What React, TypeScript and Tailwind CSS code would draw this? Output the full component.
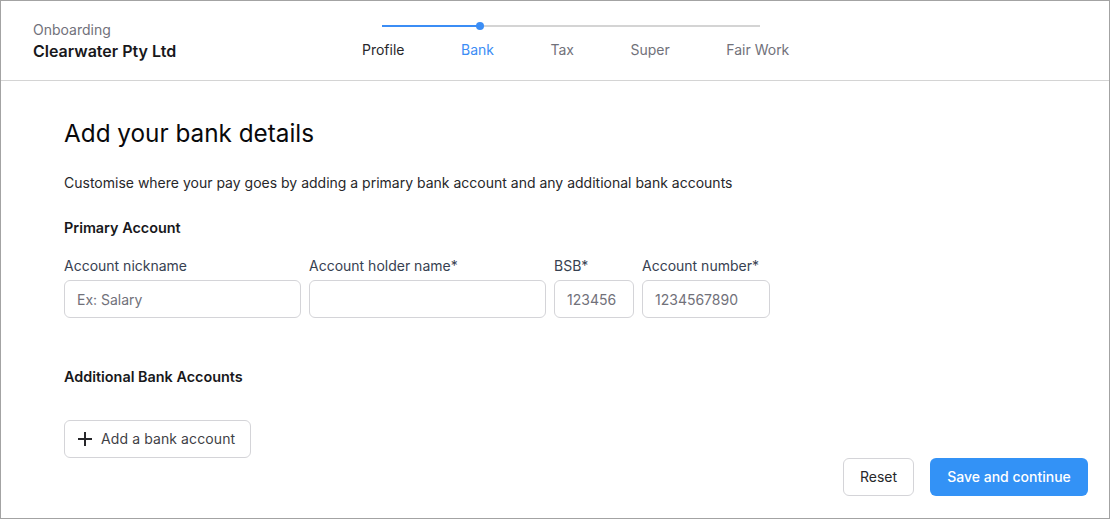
import React from 'react';

const steps = ['Profile', 'Bank', 'Tax', 'Super', 'Fair Work'];

const Field: React.FC<{ label: string; placeholder?: string; width: string }> = ({ label, placeholder, width }) => (
  <div className={`flex flex-col gap-1 ${width}`}>
    <label className="text-sm text-[#374151] leading-5">{label}</label>
    <input
      placeholder={placeholder}
      className="h-[38px] w-full rounded-md border border-[#d4d4d8] bg-white px-3 text-sm text-[#374151] placeholder:text-[#71717a] outline-none"
    />
  </div>
);

const App: React.FC = () => {
  return (
    <div
      className="w-[1110px] h-[519px] border border-[#a3a3a3] bg-white flex flex-col overflow-hidden"
      style={{ fontFamily: 'Inter, "Noto Sans", sans-serif' }}
    >
      {/* header */}
      <header className="h-[80px] shrink-0 border-b border-[#d4d4d4] flex items-start pl-[32px] pt-[19px]">
        <div className="w-[329px]">
          <div className="text-sm leading-5 text-[#71717a]">Onboarding</div>
          <div className="text-base leading-6 font-semibold text-[#18181b] -mt-px">Clearwater Pty Ltd</div>
        </div>
        <div className="relative pt-[20px]">
          <div className="absolute left-[20px] top-[5px] w-[378px] h-[2px] bg-[#d4d4d4]" />
          <div className="absolute left-[20px] top-[5px] w-[98px] h-[2px] bg-[#3b8df5]" />
          <div className="absolute left-[114px] top-[2px] w-[8px] h-[8px] rounded-full bg-[#3b8df5]" />
          <div className="flex gap-[56.5px] text-sm leading-5">
            {steps.map((s, i) => (
              <span
                key={s}
                className={i === 0 ? 'text-[#27272a]' : i === 1 ? 'text-[#3b8df5]' : 'text-[#71717a]'}
              >
                {s}
              </span>
            ))}
          </div>
        </div>
      </header>

      {/* body */}
      <main className="flex-1 flex flex-col px-[63px] pt-[36px]">
        <h1 className="text-[24.3px] leading-8 text-[#09090b]">Add your bank details</h1>
        <p className="mt-6 text-sm leading-5 text-[#27272a]">
          Customise where your pay goes by adding a primary bank account and any additional bank accounts
        </p>
        <h2 className="mt-[25px] text-[14.4px] leading-5 font-semibold text-[#18181b]">Primary Account</h2>
        <div className="mt-[18px] flex gap-2">
          <Field label="Account nickname" placeholder="Ex: Salary" width="w-[237px]" />
          <Field label="Account holder name*" width="w-[237px]" />
          <Field label="BSB*" placeholder="123456" width="w-[80px]" />
          <Field label="Account number*" placeholder="1234567890" width="w-[128px]" />
        </div>
        <h2 className="mt-[49px] text-[14.4px] leading-5 font-semibold text-[#18181b]">Additional Bank Accounts</h2>
        <div className="mt-[33px]">
          <button className="h-[38px] w-[187px] rounded-md border border-[#d4d4d8] bg-white flex items-center gap-2 pl-[12px] text-sm text-[#3f3f46]">
            <svg width="16" height="16" viewBox="0 0 16 16" fill="none" stroke="#27272a" strokeWidth="2">
              <path d="M8 1v14M1 8h14" />
            </svg>
            <span className="tracking-[0.1px]">Add a bank account</span>
          </button>
        </div>
      </main>

      <footer className="flex justify-end gap-4 pr-[21px] pb-[22px]">
        <button className="h-[38px] w-[71px] rounded-md border border-[#d4d4d8] bg-white text-sm text-[#27272a]">
          Reset
        </button>
        <button className="h-[38px] w-[158px] rounded-md bg-[#3392f6] text-sm font-medium text-white">
          Save and continue
        </button>
      </footer>
    </div>
  );
};

export default App;
